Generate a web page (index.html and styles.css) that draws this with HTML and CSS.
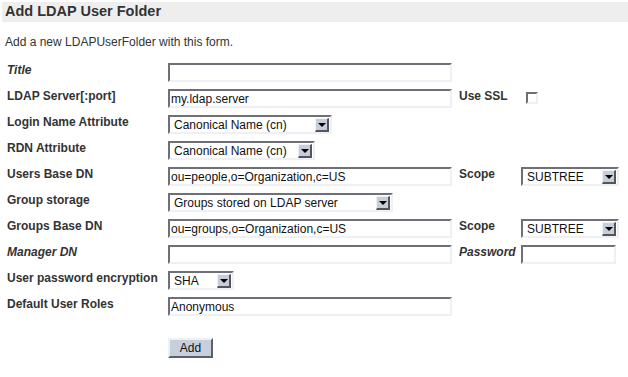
FILE: index.html
```html
<!DOCTYPE html>
<html lang="en">
<head>
    <meta charset="UTF-8">
    <title>Add LDAP User Folder</title>
    <link rel="stylesheet" href="styles.css">
</head>
<body>
    <h2 class="form-title">Add LDAP User Folder</h2>
    <p class="form-help">Add a new LDAPUserFolder with this form.</p>

    <form action="manage_addLDAPUserFolder" method="post">
        <div class="ldap-form">
            <div class="form-optional">Title</div>
            <div class="cell"><input type="text" class="text-wide" name="title"></div>
            <div></div><div></div>

            <div class="form-label">LDAP Server[:port]</div>
            <div class="cell"><input type="text" class="text-wide" name="LDAP_server" value="my.ldap.server"></div>
            <div class="form-label">Use SSL</div>
            <div class="cell"><span class="checkbox"></span></div>

            <div class="form-label">Login Name Attribute</div>
            <div class="cell">
                <span class="select w-login"><select name="login_attr"><option>Canonical Name (cn)</option></select><span class="arrow"></span></span>
            </div>
            <div></div><div></div>

            <div class="form-label">RDN Attribute</div>
            <div class="cell">
                <span class="select w-rdn"><select name="rdn_attr"><option>Canonical Name (cn)</option></select><span class="arrow"></span></span>
            </div>
            <div></div><div></div>

            <div class="form-label">Users Base DN</div>
            <div class="cell"><input type="text" class="text-wide" name="users_base" value="ou=people,o=Organization,c=US"></div>
            <div class="form-label">Scope</div>
            <div class="cell">
                <span class="select w-scope"><select name="users_scope"><option>SUBTREE</option></select><span class="arrow"></span></span>
            </div>

            <div class="form-label">Group storage</div>
            <div class="cell">
                <span class="select w-groups"><select name="local_groups"><option>Groups stored on LDAP server</option></select><span class="arrow"></span></span>
            </div>
            <div></div><div></div>

            <div class="form-label">Groups Base DN</div>
            <div class="cell"><input type="text" class="text-wide" name="groups_base" value="ou=groups,o=Organization,c=US"></div>
            <div class="form-label">Scope</div>
            <div class="cell">
                <span class="select w-scope"><select name="groups_scope"><option>SUBTREE</option></select><span class="arrow"></span></span>
            </div>

            <div class="form-optional">Manager DN</div>
            <div class="cell"><input type="text" class="text-wide" name="binduid"></div>
            <div class="form-optional">Password</div>
            <div class="cell"><input type="password" class="text-short" name="bindpwd"></div>

            <div class="form-label">User password encryption</div>
            <div class="cell">
                <span class="select w-sha"><select name="encryption"><option>SHA</option></select><span class="arrow"></span></span>
            </div>
            <div></div><div></div>

            <div class="form-label">Default User Roles</div>
            <div class="cell"><input type="text" class="text-wide" name="roles" value="Anonymous"></div>
            <div></div><div></div>
        </div>

        <div class="submit-row">
            <button type="submit" class="form-element">Add</button>
        </div>
    </form>
</body>
</html>
```

FILE: styles.css
```css
body {
    margin: 0;
    padding: 2px 0 0 2px;
    font-family: "Liberation Sans", Arial, sans-serif;
    color: #333;
    background: white;
}
.form-title {
    margin: 0;
    padding: 1px 0 0 3px;
    height: 19px;
    font-size: 14.5px;
    font-weight: bold;
    color: #333;
    background-color: #eeeeee;
}
.form-help {
    margin: 13px 0 0 3px;
    font-size: 12px;
    color: #333;
}
.ldap-form {
    display: grid;
    grid-template-columns: 161px 291px 62px auto;
    grid-auto-rows: 26px;
    margin: 14px 0 0 5px;
}
.form-label, .form-optional {
    font-size: 12px;
    font-weight: bold;
}
.form-optional {
    font-style: italic;
}
.cell {
    display: flex;
    align-items: flex-start;
}
input[type=text], input[type=password] {
    box-sizing: border-box;
    height: 19px;
    margin: 0;
    padding: 0 1px;
    font-family: "Liberation Sans", Arial, sans-serif;
    font-size: 12px;
    color: #111;
    background: white;
    border: 2px solid;
    border-color: #6f6f78 #eef0f4 #eef0f4 #6f6f78;
    outline: none;
}
.text-wide {
    width: 284px;
}
.text-short {
    width: 95px;
}
.checkbox {
    display: block;
    box-sizing: border-box;
    width: 12px;
    height: 12px;
    margin: 3px 0 0 5px;
    border: 2px solid;
    border-color: #6f6f78 #eef0f4 #eef0f4 #6f6f78;
}
.select {
    display: inline-flex;
    align-items: center;
    box-sizing: border-box;
    height: 19px;
    background: white;
    border: 2px solid;
    border-color: #6f6f78 #eef0f4 #eef0f4 #6f6f78;
}
.select select {
    -webkit-appearance: none;
    appearance: none;
    flex: 1;
    height: 15px;
    margin: 0;
    padding: 0 0 0 4px;
    border: none;
    background: transparent;
    font-family: "Liberation Sans", Arial, sans-serif;
    font-size: 12px;
    color: #111;
    outline: none;
}
.arrow {
    position: relative;
    box-sizing: border-box;
    width: 14px;
    height: 14px;
    margin-right: 1px;
    background-color: #c5ced9;
    border: 1px solid;
    border-color: #eef0f4 #55555d #55555d #eef0f4;
    border-width: 1px 2px 2px 1px;
}
.arrow::after {
    content: "";
    position: absolute;
    left: 2px;
    top: 4px;
    border-left: 4px solid transparent;
    border-right: 4px solid transparent;
    border-top: 4px solid #000;
}
.w-login { width: 164px; }
.w-rdn { width: 147px; }
.w-scope { width: 98px; }
.w-groups { width: 225px; }
.w-sha { width: 66px; }
.submit-row {
    padding: 15px 0 0 166px;
}
.form-element {
    box-sizing: border-box;
    width: 45px;
    height: 20px;
    margin: 0;
    padding: 0;
    font-family: "Liberation Sans", Arial, sans-serif;
    font-size: 12px;
    color: #111;
    background-color: #c6d0dc;
    border: 2px solid;
    border-color: #eef0f4 #5f5f68 #5f5f68 #eef0f4;
    cursor: pointer;
}
```
